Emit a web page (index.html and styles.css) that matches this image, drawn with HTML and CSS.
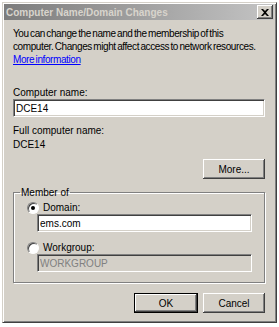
FILE: index.html
```html
<!DOCTYPE html>
<html lang="en">
<head>
    <meta charset="UTF-8">
    <title>Computer Name/Domain Changes</title>
    <link rel="stylesheet" href="styles.css">
</head>
<body>
    <div class="dialog">
        <div class="title-bar">
            <span class="title-text">Computer Name/Domain Changes</span>
            <button class="close-button">
                <svg width="8" height="7" viewBox="0 0 8 7">
                    <path d="M0 0h2l2 2 2-2h2L5 3.5 8 7H6L4 5 2 7H0l3-3.5z" fill="#000"/>
                </svg>
            </button>
        </div>

        <div class="content">
            <p class="intro">You can change the name and the membership of this<br>computer. Changes might affect access to network resources.<br><a href="#" class="link">More information</a></p>

            <label class="field-label">Computer name:</label>
            <input type="text" class="text-input" value="DCE14">

            <div class="field-label full-label">Full computer name:</div>
            <div class="full-name">DCE14</div>

            <div class="more-row">
                <button class="button">More...</button>
            </div>

            <fieldset class="group">
                <legend>Member of</legend>
                <div class="radio-row">
                    <span class="radio checked"></span>
                    <span>Domain:</span>
                </div>
                <input type="text" class="text-input sub-input" value="ems.com">
                <div class="radio-row second">
                    <span class="radio"></span>
                    <span>Workgroup:</span>
                </div>
                <input type="text" class="text-input sub-input" value="WORKGROUP" disabled>
            </fieldset>

            <div class="button-row">
                <button class="button default">OK</button>
                <button class="button">Cancel</button>
            </div>
        </div>
    </div>
</body>
</html>
```

FILE: styles.css
```css
body {
    margin: 0;
    padding: 2px 0 0 2px;
    background-color: #fff;
    font-family: 'Liberation Sans', Arial, sans-serif;
    font-size: 10px;
    color: #000;
}
.dialog {
    width: 275px;
    height: 321px;
    box-sizing: border-box;
    background-color: #d4d0c8;
    border-top: 1px solid #d4d0c8;
    border-left: 1px solid #d4d0c8;
    border-right: 1px solid #404040;
    border-bottom: 1px solid #404040;
    box-shadow: inset 1px 1px 0 #fff, inset -1px -1px 0 #808080;
    padding: 1px 2px 2px 1px;
    display: flex;
    flex-direction: column;
}
.title-bar {
    height: 16px;
    display: flex;
    align-items: center;
    justify-content: space-between;
    padding: 0 1px 0 2px;
    background: linear-gradient(to right, #7c7c7c, #c4c4c4);
}
.title-text {
    font-weight: bold;
    color: #d8d4cc;
    font-size: 10px;
}
.close-button {
    width: 16px;
    height: 14px;
    padding: 0;
    display: flex;
    align-items: center;
    justify-content: center;
    background-color: #d4d0c8;
    border: none;
    box-shadow: inset -1px -1px 0 #404040, inset 1px 1px 0 #fff, inset -2px -2px 0 #808080;
}
.content {
    padding: 7px 9px 0 9px;
    display: flex;
    flex-direction: column;
}
.intro {
    margin: 0 0 20px 0;
    line-height: 13px;
    white-space: nowrap;
    letter-spacing: -0.4px;
    word-spacing: -1px;
}
.link {
    color: #0000ff;
    text-decoration: underline;
}
.field-label {
    display: block;
    line-height: 13px;
}
.text-input {
    height: 18px;
    box-sizing: border-box;
    font-family: inherit;
    font-size: 10px;
    padding: 1px 2px;
    background-color: #fff;
    border: 1px solid;
    border-color: #808080 #fff #fff #808080;
    box-shadow: inset 1px 1px 0 #404040, inset -1px -1px 0 #d4d0c8;
    outline: none;
    color: #000;
}
.text-input:disabled {
    background-color: #d4d0c8;
    color: #808080;
}
.full-label {
    margin-top: 7px;
    margin-bottom: 1px;
}
.full-name {
    line-height: 13px;
}
.more-row {
    display: flex;
    justify-content: flex-end;
    margin-top: 8px;
}
.button {
    width: 62px;
    height: 20px;
    padding: 0;
    font-family: inherit;
    font-size: 10px;
    color: #000;
    background-color: #d4d0c8;
    border: none;
    box-shadow: inset -1px -1px 0 #404040, inset 1px 1px 0 #fff, inset -2px -2px 0 #808080;
}
.button.default {
    box-shadow: inset 0 0 0 1px #000, inset -2px -2px 0 #404040, inset 2px 2px 0 #fff, inset -3px -3px 0 #808080;
    width: 64px;
}
.group {
    margin: 8px 0 0 0;
    padding: 3px 0 10px 6px;
    border: 1px solid #808080;
    box-shadow: 1px 1px 0 #fff, inset 1px 1px 0 #fff;
    display: flex;
    flex-direction: column;
    min-width: 0;
}
.group legend {
    padding: 0 1px;
    margin-left: 0;
    line-height: 11px;
}
.radio-row {
    display: flex;
    align-items: center;
    gap: 4px;
    margin-left: 7px;
    height: 13px;
}
.radio-row.second {
    margin-top: 9px;
}
.radio {
    width: 12px;
    height: 12px;
    box-sizing: border-box;
    border-radius: 50%;
    background-color: #fff;
    border: 1px solid;
    border-color: #808080 #fff #fff #808080;
    box-shadow: inset 1px 1px 0 #404040;
    position: relative;
}
.radio.checked::after {
    content: "";
    position: absolute;
    left: 3px;
    top: 3px;
    width: 4px;
    height: 4px;
    border-radius: 50%;
    background-color: #000;
}
.sub-input {
    width: 215px;
    margin-left: 17px;
}
.button-row {
    display: flex;
    justify-content: flex-end;
    gap: 5px;
    margin-top: 10px;
}
```
